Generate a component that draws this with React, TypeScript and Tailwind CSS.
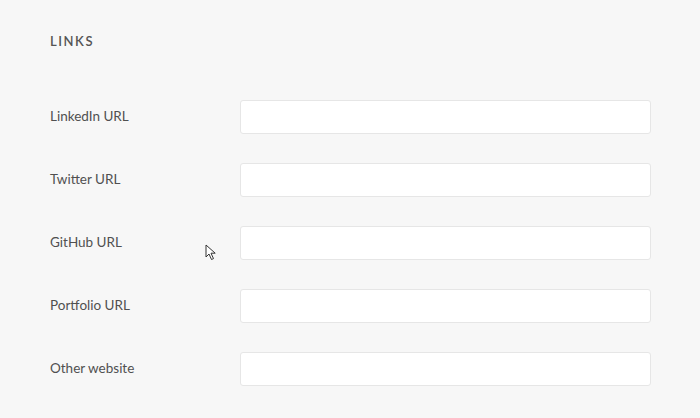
const fields = ["LinkedIn URL", "Twitter URL", "GitHub URL", "Portfolio URL", "Other website"];

export default function App() {
  return (
    <div className="relative min-h-[418px] w-[700px] bg-[#f7f7f7] font-['Lato',sans-serif] text-[#4a4a4a]">
      <div className="pl-[50px] pr-[49px] pt-[33px]">
        <h2 className="text-[13px] font-semibold tracking-[0.12em] leading-4 text-[#555]">LINKS</h2>
        <div className="mt-[51px] flex flex-col gap-[29px]">
          {fields.map((f) => (
            <div key={f} className="flex items-center">
              <label className="w-[190px] pb-[1px] text-[13.5px] text-[#505050]">{f}</label>
              <input
                type="text"
                className="h-[34px] flex-1 rounded-[3px] border border-[#e6e6e6] bg-white px-3 text-[14px] outline-none"
              />
            </div>
          ))}
        </div>
      </div>
      <svg className="absolute left-[205px] top-[244px]" width="12" height="17" viewBox="0 0 12 17">
        <path d="M1 1 L1 13 L4 10 L6.5 15.5 L8.5 14.6 L6 9.2 L10.2 9.2 Z" fill="#fff" stroke="#333" strokeWidth="1" strokeLinejoin="round" />
      </svg>
    </div>
  );
}
